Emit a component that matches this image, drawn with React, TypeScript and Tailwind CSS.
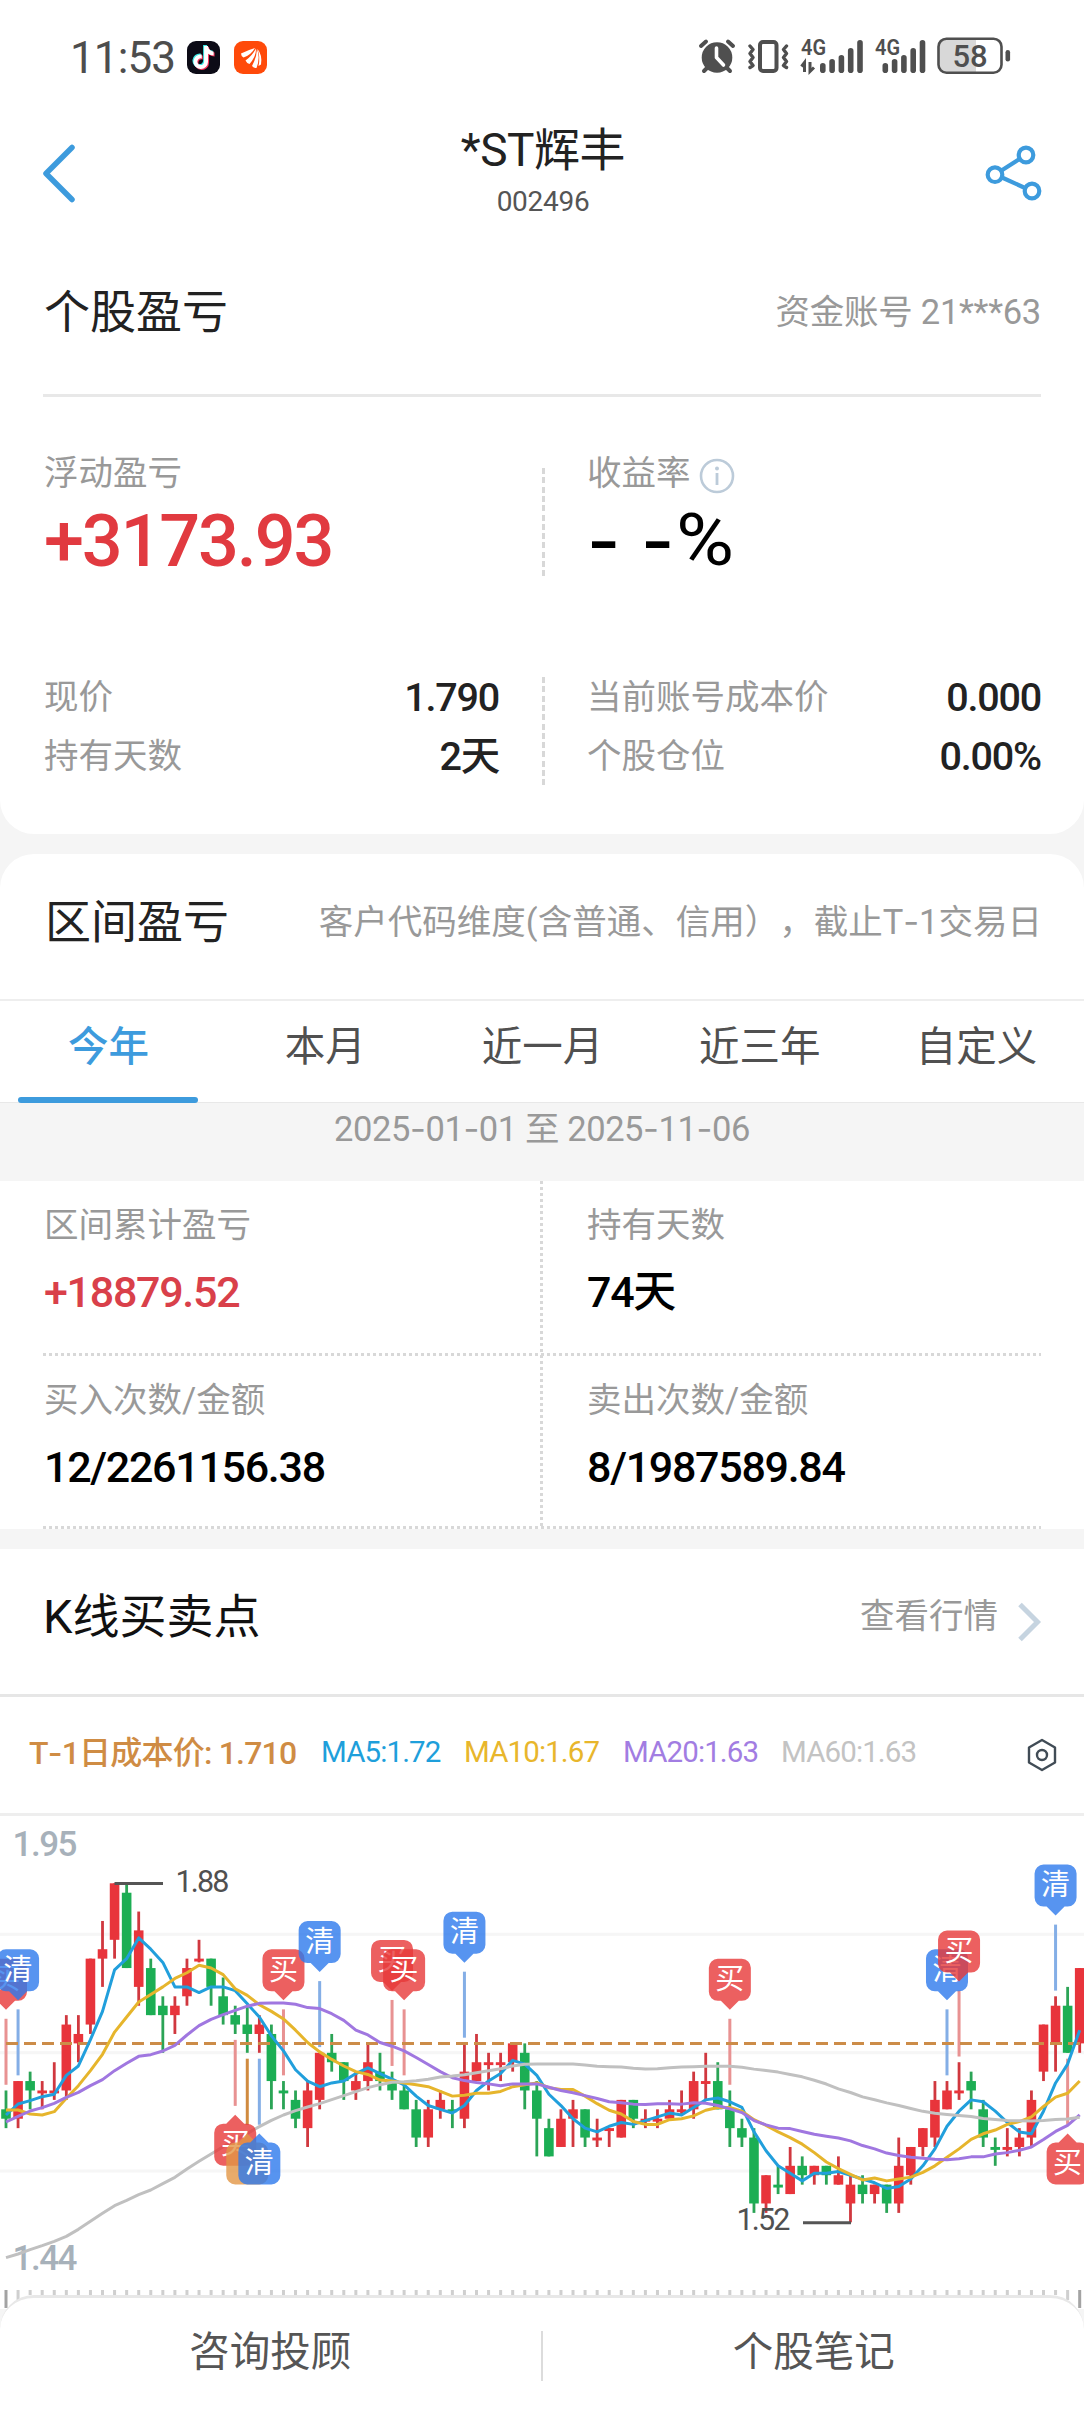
import React from "react";
import { FaTiktok } from "react-icons/fa6";

/* ---------- chart data (prices in cents) ---------- */
// [direction, body top, body bottom, high, low]
type Candle = [string, number, number, number, number];
const candles: Candle[] = [
  ["g",164,163,166,162],["r",167,163,167,162],["g",167,166,168,164],["r",166,166,167,164],["r",166,166,169,165],
  ["r",173,166,174,165],["r",172,171,174,169],["r",180,173,180,172],["r",181,180,184,177],["r",188,182,188,180],
  ["g",187,179,188,179],["r",183,177,185,175],["g",179,174,180,174],["g",175,174,176,170],["r",175,174,176,172],
  ["r",179,176,180,175],["r",180,180,182,179.6],["g",180,177,180,175],["g",176,174,178,173],["g",174,173,175,172],
  ["g",173,172,175,170],["r",173,172,174,170],["g",172,167,173,164],["g",166,166,167,164],["g",165,163,166,162],
  ["r",166,162,167,160],["r",170,165,170,164],["g",170,169,172,168],["g",169,167,169,165],["r",167,166,168,165],
  ["r",169,167,171,166],["g",168,167,170,166],["g",167,166,168,165],["g",166,164,167,164],["g",164,161,165,160],
  ["r",164,161,165,160],["r",165,164,166,163],["g",164,164,165,162],["r",168,163,171,162],["r",169,167,172,167],
  ["r",169,169,170,166],["r",169,169,170,167],["r",171,169,171,168],["g",170,166,171,164],["g",166,163,167,159],
  ["g",162,159,163,159],["r",163,160,164,160],["r",164,163,165,160],["g",164,161,164,160],["r",161,161,163,160],
  ["r",162,162,162,160],["r",165,161,165,161],["g",165,163,165,162],["r",163,163,164,162],["r",163,163,164,162],
  ["r",164,163,165,163],["r",164,164,166,163.4],["r",167,164,168,163],["r",167,167,170,165],["g",167,164,169,164],
  ["g",164,162,166,160],["g",162,161,163,160],["g",161,154,162,153],["r",157,154,157,153],["g",156,156,158,155],
  ["r",158,155,160,155],["g",158,157,159,156],["r",158,157,158,156],["g",158,157,158,156],["r",157,156,159,156],
  ["r",156,154,157,152],["g",156,155,157,154],["r",156,155,156,154],["g",156,154,156,153],["r",158,154,161,153],
  ["r",160,157,160,156],["r",162,160,162,159],["r",165,161,167,160],["r",166,164,167,164],["r",166,166,169,165],
  ["g",167,166,168,164],["g",164,161,165,160],["g",160,160,161,158],["r",160,160,162,159],["r",161,160,162,159],
  ["r",165,161,166,160],["r",173,168,173,167],["r",175,171,176,168],["g",175,170,177,170],["r",179,171,179,170],
];

const STEP = 12.064;
const CENT = 9.417;
const px = (i: number) => 6 + i * STEP;
const py = (p: number) => 67.3 + (188 - p) * CENT;
const closes = candles.map((c) => (c[0] === "r" ? c[1] : c[2]));

// Averages that reach back before the visible window start from stored heights.
const seeds: Record<number, number[]> = {
  5: [885, 852, 842, 830],
  10: [870, 870, 882, 885, 875, 835, 797, 752, 703],
  20: [906, 889, 873, 863, 850, 832, 817, 797, 779, 752, 730, 709, 704, 693, 676, 645, 617, 598, 584],
  60: [1313, 1302, 1289, 1277, 1264, 1249, 1228, 1204, 1180, 1157, 1141, 1124, 1110, 1091, 1072, 1047, 1024, 1002, 980,
    960, 940, 920, 901, 885, 872, 861, 851, 839, 827, 815, 803, 794, 787, 785, 782, 778, 771, 768, 764, 758, 752, 746,
    738, 733, 732, 732, 732, 732, 735, 739, 740, 741, 745, 747, 746, 743, 741, 740, 739],
};

function maPoints(n: number) {
  return closes
    .map((_, i) => {
      if (i < n - 1) return `${px(i)},${seeds[n][i] / 3 + 4}`;
      const sum = closes.slice(i - n + 1, i + 1).reduce((a, b) => a + b, 0);
      return `${px(i)},${py(sum / n)}`;
    })
    .join(" ");
}

const tones: Record<string, [string, string]> = {
  buy: ["#e73838", "#e89292"],
  clear: ["#2d79ec", "#84aee6"],
  t: ["#e29645", "#d08b40"],
};
// [candle index, tone, label, below the candle]
const markers: [number, string, string, boolean][] = [
  [0, "buy", "买", false], [1, "clear", "清", false], [19, "buy", "买", true], [20, "t", "", true],
  [21, "clear", "清", true], [23, "buy", "买", false], [26, "clear", "清", false], [32, "buy", "买", false],
  [33, "buy", "买", false], [38, "clear", "清", false], [60, "buy", "买", false], [78, "clear", "清", false],
  [79, "buy", "买", false], [87, "clear", "清", false], [88, "buy", "买", true],
];

function Marker({ m }: { m: [number, string, string, boolean] }) {
  const [i, tone, label, below] = m;
  const x = px(i);
  const base = below ? py(candles[i][4]) : py(candles[i][3]);
  const s = below ? 1 : -1;
  const y = (d: number) => base + s * d;
  const near = y(89.7);
  const far = y(131.7);
  const top = Math.min(near, far);
  const r = 9;
  const sw = below ? 1 : 0;
  const d = `M${x - 9} ${near} L${x} ${y(80.7)} L${x + 9} ${near} H${x + 21 - r} A${r} ${r} 0 0 ${sw} ${x + 21} ${near + s * r} V${far - s * r} A${r} ${r} 0 0 ${1 - (1 - sw)} ${x + 21 - r} ${far} H${x - 21 + r} A${r} ${r} 0 0 ${sw} ${x - 21} ${far - s * r} V${near + s * r} A${r} ${r} 0 0 ${sw} ${x - 21 + r} ${near} Z`;
  return (
    <g>
      <path d={d} fill={tones[tone][0]} fillOpacity={0.8} />
      <text x={x} y={top + 30.5} textAnchor="middle" fontSize={29} fill="#fff" className="font-['Noto_Sans_CJK_SC',sans-serif]">{label}</text>
    </g>
  );
}

function Chart() {
  return (
    <svg width={1084} height={493} viewBox="0 0 1084 493" className="block font-['Roboto','Noto_Sans_CJK_SC',sans-serif]">
      {[118.3, 236.7, 355].map((y) => (
        <rect key={y} x={0} y={y - 1.5} width={1084} height={3} fill="#f6f6f6" />
      ))}
      <text x={12.5} y={39.8} fontSize={35} fontWeight={500} textLength={65} fill="#a7b1ba">1.95</text>
      <text x={12.5} y={454} fontSize={35} fontWeight={500} textLength={65} fill="#a7b1ba">1.44</text>
      {candles.map((c, i) => {
        const fill = c[0] === "r" ? "#e8343b" : "#1cae54";
        const dark = c[0] === "r" ? "#d0383f" : "#2ba456";
        return (
          <g key={i}>
            <rect x={px(i) - 1.4} y={py(c[3])} width={2.8} height={Math.max(3, py(c[4]) - py(c[3]))} fill={dark} />
            <rect x={px(i) - 4.8} y={py(c[1])} width={9.6} height={Math.max(2.9, py(c[2]) - py(c[1]))} fill={fill} />
          </g>
        );
      })}
      <path d="M114.5 67.5 H163" stroke="#555" strokeWidth={3} />
      <text x={175.5} y={76} fontSize={30.5} textLength={54} fill="#505050">1.88</text>
      <path d="M803 406.7 H851" stroke="#555" strokeWidth={3} />
      <text x={736.5} y={413.7} fontSize={30.5} textLength={54} fill="#505050">1.52</text>
      {markers.map((m, k) => {
        const [i, tone, , below] = m;
        const b = below ? py(candles[i][4]) + 5.9 : py(candles[i][3]) - 71.7;
        return <rect key={k} x={px(i) - 1.5} y={b} width={3} height={66} fill={tones[tone][1]} />;
      })}
      <path d="M6 227.4 H1084" stroke="#cc8c48" strokeWidth={3} strokeDasharray="12 6" />
      <g fill="none" strokeWidth={3} strokeLinejoin="round">
        <polyline points={maPoints(5)} stroke="#219fdc" />
        <polyline points={maPoints(10)} stroke="#e6b52c" />
        <polyline points={maPoints(20)} stroke="#a077e0" />
        <polyline points={maPoints(60)} stroke="#c0c0c0" />
      </g>
      {markers.map((m, k) => <Marker key={k} m={m} />)}
      {candles.map((_, i) => {
        const end = i === 0 || i === 89;
        return <rect key={i} x={px(i) - 1.5} y={474} width={3} height={end ? 18 : i === 1 || i === 88 ? 10 : 5} fill={end ? "#a3a3a3" : "#cfcfcf"} />;
      })}
    </svg>
  );
}

/* ---------- icons ---------- */
function StatusIcons() {
  const bars = (x: number) =>
    [10, 14, 18, 25, 33].map((h, i) => (
      <rect key={i} x={x + i * 9.3} y={38 - h} width={5.6} height={h} rx={2.8} />
    ));
  return (
    <svg width={320} height={42} viewBox="0 0 320 42" fill="#4f4f4f" className="font-['Roboto',sans-serif]">
      <circle cx={22} cy={22.5} r={15.3} />
      <g stroke="#4f4f4f" strokeWidth={4} strokeLinecap="round" fill="none">
        <path d="M6 11 L11 6.5 M38 11 L33 6.5 M9 36 L13 32 M35 36 L31 32" />
        <path d="M21.5 13 V22.5 L28.5 30" stroke="#fff" strokeWidth={3.6} strokeLinejoin="round" />
        <rect x={65} y={7} width={16.5} height={29} rx={3} />
        <path d="M55 11 l3 3.5 -3 4 3 4 -3 4 3 4 -3 2 M91.5 11 l-3 3.5 3 4 -3 4 3 4 -3 4 3 2" strokeWidth={3.4} strokeLinejoin="round" />
      </g>
      <text x={106} y={20.3} fontSize={22.5} fontWeight={600} textLength={25} lengthAdjust="spacingAndGlyphs">4G</text>
      <path d="M109.5 37 V27.5 L106.5 31.5 M115 27 V36.5 L119 32.5" stroke="#4f4f4f" strokeWidth={3} fill="none" />
      {bars(125)}
      <text x={180} y={20.3} fontSize={22.5} fontWeight={600} textLength={25} lengthAdjust="spacingAndGlyphs">4G</text>
      {bars(187.5)}
      <rect x={243.5} y={3.7} width={63} height={34} rx={8} fill="#fff" />
      <path d="M281 3.7 H251.5 a8 8 0 0 0 -8 8 V29.7 a8 8 0 0 0 8 8 H281 Z" fill="#d8d8d8" />
      <rect x={243.5} y={3.7} width={63} height={34} rx={8} fill="none" stroke="#4f4f4f" strokeWidth={2.6} />
      <rect x={310.5} y={15} width={4.6} height={11.5} rx={2.3} />
      <text x={275} y={31.7} fontSize={31} fontWeight={500} textAnchor="middle" textLength={35}>58</text>
    </svg>
  );
}

const H_DOTS = "h-[3px] bg-[repeating-linear-gradient(90deg,#d8d8d8_0_3px,transparent_3px_6px)]";
const V_DASH = "w-[2.5px] bg-[repeating-linear-gradient(180deg,#d8d8d8_0_6px,transparent_6px_9.3px)]";

function Hy() {
  return <span className="font-['Inter',sans-serif]">-</span>;
}

function Pair({ label, value }: { label: string; value: string }) {
  return (
    <div className="flex h-[59px] items-center justify-between">
      <span className="text-[34.5px] text-[#999]">{label}</span>
      <span className="text-[39.5px] font-medium tracking-[-0.03em] text-[#222]">{value}</span>
    </div>
  );
}

function Cell({ label, value, red }: { label: string; value: string; red?: boolean }) {
  return (
    <div className="flex h-[172px] w-[499px] shrink-0 flex-col pl-px pt-[21px]">
      <span className="text-[34.5px]/[46px] text-[#999]">{label}</span>
      <span className={`mt-[17px] text-[43px]/[54px] font-medium tracking-[-0.03em] ${red ? "text-[#d9404a]" : "text-black"}`}>{value}</span>
    </div>
  );
}

export default function App() {
  return (
    <div className="h-[2412px] w-[1084px] overflow-hidden bg-[#f5f5f5] font-['Roboto','Noto_Sans_CJK_SC',sans-serif] leading-none text-[#222]">
      <section className="h-[834px] rounded-b-[34px] bg-white">
        <div className="flex h-[114px] items-center pl-[70px] pr-[69px]">
          <span className="w-[117px] pt-px text-[44px] tracking-[-0.02em] text-[#4d4d4d]">11:53</span>
          <span className="relative block h-[33px] w-[33px] rounded-[9px] bg-[#0c0b16]">
            <FaTiktok className="absolute left-[4px] top-[4px] text-[#3de8e4]" size={23} />
            <FaTiktok className="absolute left-[6px] top-[6px] text-[#f5365c]" size={23} />
            <FaTiktok className="absolute left-[5px] top-[5px] text-white" size={23} />
          </span>
          <svg width={33} height={33} viewBox="0 0 33 33" className="ml-[14px]">
            <rect width={33} height={33} rx={9} fill="#ff4a0a" />
            <g fill="#fff">
              <path d="M7 12.5 Q14 9 21 7 Q17 14 9.5 16.5 Q7 15 7 12.5 Z" />
              <path d="M11.5 19.5 Q18 15 22 7.500 Q22.500 15 15.500 23 Q12.500 22 11.500 19.500 Z" />
              <path d="M18 25 Q22.500 17 23 8 Q26.500 17 22.500 27 Q20 27.500 18 25 Z" />
              <path d="M24.500 25 Q26.500 16 23.500 8 Q28.500 14 27 23.500 Z" />
            </g>
          </svg>
          <div className="ml-auto mt-[-2px]"><StatusIcons /></div>
        </div>

        <div className="flex h-[131px] items-start justify-between px-[41px]">
          <svg width={40} height={64} viewBox="0 0 40 64" className="mt-[27px]" fill="none" stroke="#3d9bdd" strokeWidth={5.5} strokeLinecap="round" strokeLinejoin="round">
            <path d="M31 6.5 L5 32.5 L31 58.5" />
          </svg>
          <div className="flex flex-col items-center pl-[24px]">
            <h1 className="mt-[9px] text-[46px]/[54px] tracking-[-0.01em]">*ST辉丰</h1>
            <span className="mt-[9px] text-[28px]/[32px] tracking-[-0.01em] text-[#555]">002496</span>
          </div>
          <svg width={62} height={60} viewBox="0 0 62 60" className="mt-[29px]" fill="none" stroke="#3d9bdd" strokeWidth={4.2}>
            <circle cx={14} cy={31.7} r={7.3} />
            <circle cx={45} cy={12} r={7.3} />
            <circle cx={51} cy={48} r={7.3} />
            <path d="M20.5 27.5 L38.5 16 M21 34.5 L44 45" />
          </svg>
        </div>

        <div className="mx-[43px] flex h-[152px] items-center justify-between border-b-[3px] border-[#e8e8e8] pb-[16px]">
          <h2 className="pl-px text-[46px]">个股盈亏</h2>
          <span className="pt-[2px] text-[34.5px] tracking-[-0.008em] text-[#999]">资金账号 21***63</span>
        </div>

        <div className="mx-[43px] flex h-[224px] pt-[53px]">
          <div className="w-[499px] pl-px">
            <div className="text-[34.5px]/[46px] text-[#999]">浮动盈亏</div>
            <div className="mt-[6px] text-[72px]/[80px] font-medium tracking-[-0.03em] text-[#e13a40]">+3173.93</div>
          </div>
          <div className={`${V_DASH} mt-[18px] h-[108px]`} />
          <div className="ml-[42.5px]">
            <div className="flex items-center text-[34.5px]/[46px] text-[#999]">
              收益率
              <svg width={36} height={36} viewBox="0 0 36 36" className="ml-[8px] mt-[3px] mb-[-3px]">
                <circle cx={18} cy={18} r={16} fill="none" stroke="#bccbd9" strokeWidth={2.6} />
                <circle cx={18} cy={10.5} r={2} fill="#bccbd9" />
                <path d="M18 15 V27" stroke="#bccbd9" strokeWidth={2.8} />
              </svg>
            </div>
            <div className="mt-[5px] flex text-[72px]/[80px] font-medium text-black">
              <span className="whitespace-pre tracking-[0.02em]"><Hy /> <Hy /></span>
              <span className="origin-left scale-x-110 font-normal">%</span>
            </div>
          </div>
        </div>

        <div className="mx-[43px] flex pt-[47px]">
          <div className="w-[456px] pl-px">
            <Pair label="现价" value="1.790" />
            <Pair label="持有天数" value="2天" />
          </div>
          <div className={`${V_DASH} ml-[43px] mt-[9px] h-[110px]`} />
          <div className="ml-[42.5px] flex-1">
            <Pair label="当前账号成本价" value="0.000" />
            <Pair label="个股仓位" value="0.00%" />
          </div>
        </div>
      </section>

      <section className="mt-[20px]">
        <div className="flex h-[147px] items-center justify-between rounded-t-[34px] border-b-2 border-[#eee] bg-white pb-[10px] pl-[45px] pr-[42px]">
          <h2 className="text-[46px]">区间盈亏</h2>
          <span className="pt-[2px] text-[34.5px] text-[#999] [text-spacing-trim:space-all]">客户代码维度(含普通、信用），截止T<Hy />1交易日</span>
        </div>
        <div className="grid h-[102px] grid-cols-5 border-b border-[#e8e8e8] bg-white text-center text-[40.5px]/[92px] text-[#505050]">
          <div className="relative font-medium text-[#3d9bdd]">
            今年
            <span className="absolute bottom-[-1px] left-[18px] h-[6px] w-[180px] rounded-[3px] bg-[#3d9bdd]" />
          </div>
          <div>本月</div>
          <div className="pl-px">近一月</div>
          <div className="pl-[2px]">近三年</div>
          <div className="pl-[2px]">自定义</div>
        </div>
        <div className="h-[78px] text-center text-[34.5px]/[52px] tracking-[-0.012em] text-[#999]">2025<Hy />01<Hy />01 至 2025<Hy />11<Hy />06</div>
        <div className="relative h-[348px] bg-white px-[43px]">
          <div className="flex">
            <Cell label="区间累计盈亏" value="+18879.52" red />
            <div className="pl-[44px]"><Cell label="持有天数" value="74天" /></div>
          </div>
          <div className={H_DOTS} />
          <div className="flex">
            <Cell label="买入次数/金额" value="12/2261156.38" />
            <div className="pl-[44px]"><Cell label="卖出次数/金额" value="8/1987589.84" /></div>
          </div>
          <div className={`${H_DOTS} mt-[-2px]`} />
          <div className="absolute left-[540px] top-0 h-[348px] w-[2.5px] bg-[repeating-linear-gradient(180deg,#d8d8d8_0_3px,transparent_3px_6px)]" />
        </div>
      </section>

      <section className="mt-[20px] bg-white">
        <div className="flex h-[148px] items-center border-b-[3px] border-[#e6e6e6] pb-[11px] pl-[43px] pr-[40px]">
          <h2 className="text-[47px] text-[#111]">K线买卖点</h2>
          <span className="ml-auto pt-px text-[34.5px] text-[#999]">查看行情</span>
          <svg width={28} height={40} viewBox="0 0 28 40" className="ml-[18px] mt-[11px]" fill="none" stroke="#c6d4e0" strokeWidth={5}>
            <path d="M4 2.5 L21.5 20 L4 37.5" />
          </svg>
        </div>
        <div className="flex h-[119px] items-center border-b-[3px] border-[#eee] pb-[4px] pl-[29px] pr-[27px] text-[29.5px] tracking-[-0.03em]">
          <span className="w-[292px] whitespace-nowrap text-[32px] font-medium tracking-[-0.025em] text-[#cf8c44]">T<Hy />1日成本价: 1.710</span>
          <span className="w-[143px] text-[#1e9fdb]">MA5:1.72</span>
          <span className="w-[159px] text-[#e8b62c]">MA10:1.67</span>
          <span className="w-[158px] text-[#a27de2]">MA20:1.63</span>
          <span className="text-[#c3c3c3]">MA60:1.63</span>
          <svg width={30} height={34} viewBox="0 0 30 34" className="ml-auto mt-[4px]" fill="none" stroke="#414c56" strokeWidth={2.4} strokeLinejoin="round">
            <path d="M15 2 L28 9.5 V24.5 L15 32 L2 24.5 V9.5 Z" />
            <circle cx={15} cy={17} r={5} />
          </svg>
        </div>
        <Chart />
      </section>

      <nav className="relative mt-[-14px] flex h-[117px] items-start rounded-t-[34px] border-t-[3px] border-[#e8e8e8] bg-white text-center text-[40.5px]/[108px] text-[#555]">
        <div className="flex-1">咨询投顾</div>
        <div className="mt-[33px] h-[50px] w-[2px] bg-[#dcdcdc]" />
        <div className="flex-1 pl-px">个股笔记</div>
      </nav>
    </div>
  );
}
